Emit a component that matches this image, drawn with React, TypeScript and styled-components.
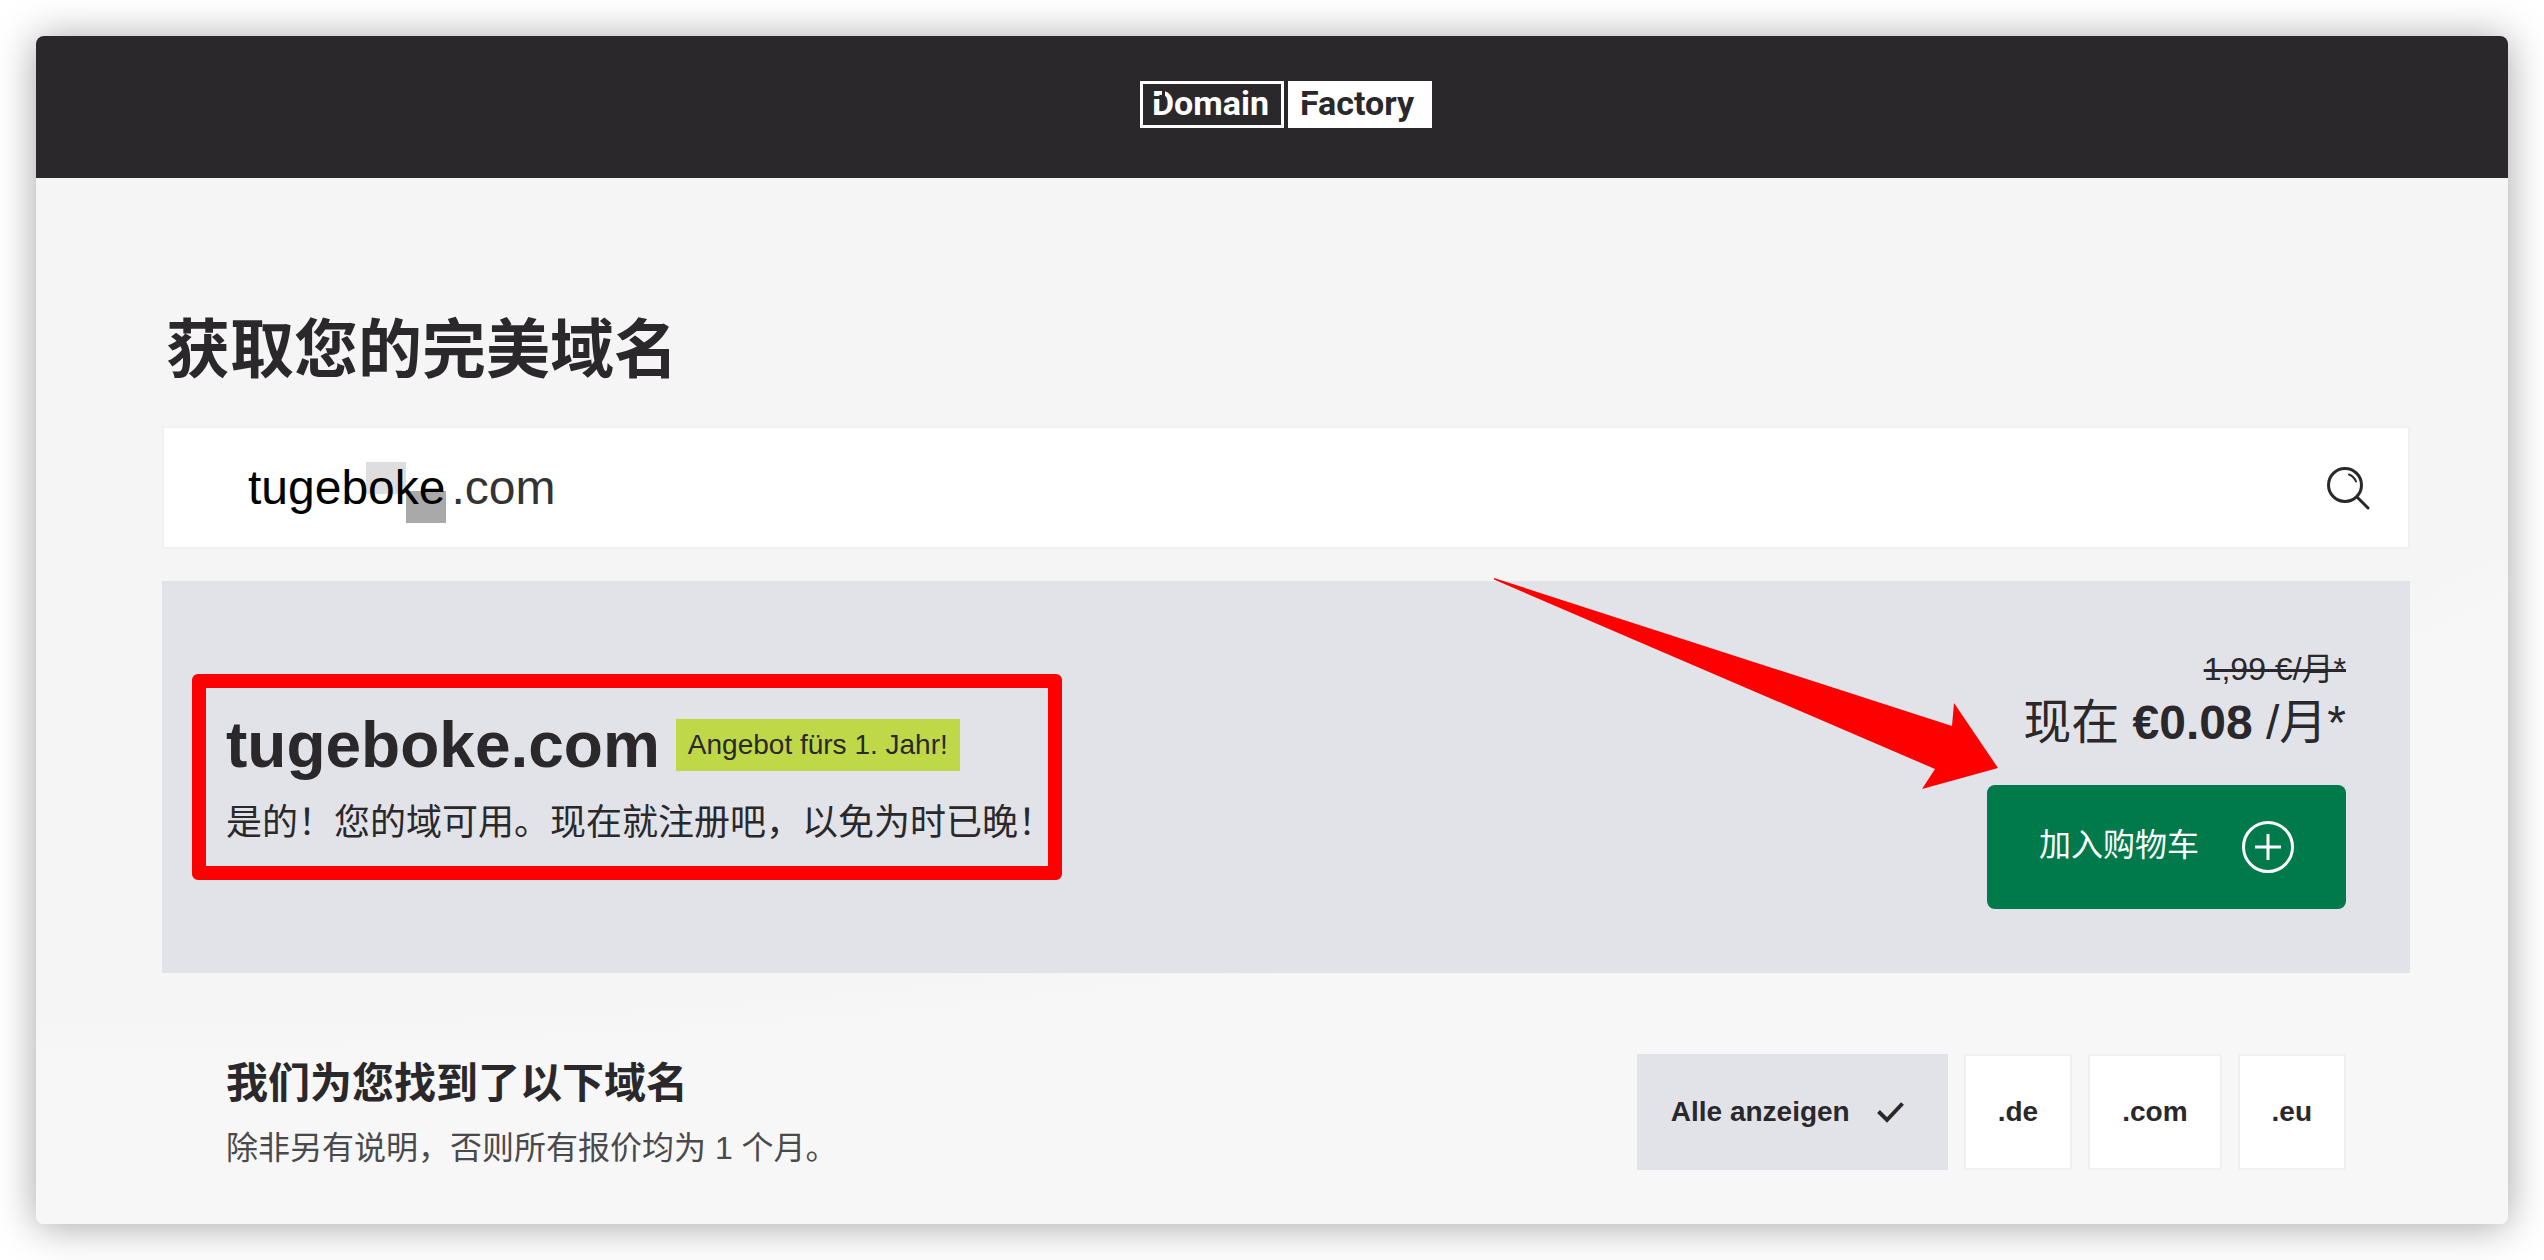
import React, { useState } from "react";
import styled, { createGlobalStyle } from "styled-components";

const ink = "#2a282b";
const panel = "#e2e3e8";
const hairline = "#f0f0f0";
const alertRed = "#ff0000";

const GlobalStyle = createGlobalStyle`
  *, *::before, *::after { box-sizing: border-box; }
  body {
    margin: 0;
    background: #ffffff;
    color: ${ink};
    font-family: "Liberation Sans", "Noto Sans CJK SC", sans-serif;
  }
  h1, h2, h3, p { margin: 0; }
  button, input { font-family: inherit; color: inherit; }
`;

const Stage = styled.div`
  padding: 36px;
`;

const Card = styled.div`
  overflow: hidden;
  border-radius: 8px;
  background: radial-gradient(ellipse 115% 84% at 4% 2%, #f5f5f5 96%, #f7f7f7 100%);
`;

const Shadow = styled.div`
  border-radius: 8px;
  box-shadow: 0 2px 40px rgba(0, 0, 0, 0.36);
`;

const Header = styled.header`
  display: flex;
  align-items: center;
  justify-content: center;
  height: 142px;
  padding: 0 98px 6px 126px;
  background: ${ink};
`;

const LogoLink = styled.a`
  display: block;
  line-height: 0;
`;

const LogoText = styled.text`
  font-family: Roboto, sans-serif;
  font-size: 34px;
  font-weight: 700;
`;

const Main = styled.main`
  padding: 132px 98px 54px 126px;
`;

const PageTitle = styled.h1`
  margin-bottom: 36px;
  padding-left: 4px;
  font-size: 64px;
  line-height: 80px;
  font-weight: 700;
`;

const SearchForm = styled.form`
  display: flex;
  align-items: center;
  height: 123px;
  margin-bottom: 32px;
  padding: 0 38px 0 84px;
  border: 2px solid ${hairline};
  background: #ffffff;
`;

const Masked = styled.span`
  position: relative;
  z-index: 0;
  margin-right: 6px;
  color: #000000;
  font-size: 48px;
  line-height: 60px;
`;

const Tile = styled.span<{ $tone: string; $right: number; $top: number }>`
  position: absolute;
  z-index: -1;
  top: ${(p) => p.$top}px;
  right: ${(p) => p.$right}px;
  width: 40px;
  height: 32px;
  background: ${(p) => p.$tone};
`;

const SearchInput = styled.input`
  flex: 1;
  min-width: 0;
  height: 60px;
  padding: 0;
  border: 0;
  outline: 0;
  background: transparent;
  color: #333333;
  font-size: 48px;
  line-height: 60px;
`;

const IconButton = styled.button`
  display: flex;
  padding: 0;
  border: 0;
  background: transparent;
  cursor: pointer;
`;

const Offer = styled.section`
  position: relative;
  display: flex;
  align-items: center;
  justify-content: space-between;
  padding: 64px;
  background: ${panel};
`;

const OfferInfo = styled.div`
  position: relative;
  display: flex;
  flex-direction: column;
  gap: 12px;
`;

const Marker = styled.div`
  position: absolute;
  inset: -31px -8px -31px -34px;
  border: 14px solid ${alertRed};
  border-radius: 6px;
  pointer-events: none;
`;

const Arrow = styled.svg`
  position: absolute;
  top: -3px;
  right: 412px;
  pointer-events: none;
`;

const DomainLine = styled.div`
  display: flex;
  align-items: center;
  gap: 16px;
`;

const DomainName = styled.h2`
  font-size: 64px;
  line-height: 80px;
  font-weight: 700;
`;

const Badge = styled.span`
  padding: 0 12px;
  background: #bfd847;
  font-size: 28px;
  line-height: 52px;
`;

const OfferText = styled.p`
  font-size: 36px;
  line-height: 52px;
`;

const OfferAction = styled.div`
  display: flex;
  flex-direction: column;
  align-items: flex-end;
`;

const OldPrice = styled.s`
  height: 48px;
  font-size: 32px;
  line-height: 48px;
  text-decoration-thickness: 3px;
`;

const Price = styled.p`
  height: 60px;
  margin-bottom: 32px;
  font-size: 48px;
  line-height: 60px;
`;

const CartButton = styled.button`
  display: flex;
  align-items: center;
  gap: 43px;
  height: 124px;
  padding: 0 52px;
  border: 0;
  border-radius: 8px;
  background: #007a4b;
  color: #ffffff;
  font-size: 32px;
  line-height: 48px;
  cursor: pointer;
`;

const CartLabel = styled.span`
  padding-bottom: 4px;
`;

const Results = styled.section`
  display: flex;
  align-items: flex-start;
  justify-content: space-between;
  padding: 81px 64px 0;
`;

const ResultsIntro = styled.div`
  display: flex;
  flex-direction: column;
  gap: 12px;
`;

const ResultsTitle = styled.h3`
  font-size: 42px;
  line-height: 60px;
  font-weight: 700;
`;

const ResultsNote = styled.p`
  color: #4a4a4c;
  font-size: 32px;
  line-height: 44px;
`;

const Filters = styled.div`
  display: flex;
  gap: 16px;
`;

const FilterButton = styled.button<{ $active: boolean }>`
  display: flex;
  align-items: center;
  gap: 24px;
  height: 116px;
  padding: 0 32px;
  border: 2px solid ${(p) => (p.$active ? panel : hairline)};
  background: ${(p) => (p.$active ? panel : "#ffffff")};
  font-size: 28px;
  line-height: 36px;
  font-weight: 700;
  cursor: pointer;
`;

function Logo() {
  return (
    <svg width="292" height="47" viewBox="0 0 292 47" role="img" aria-label="DomainFactory">
      <rect x="1.5" y="1.5" width="141" height="44" fill="none" stroke="#ffffff" strokeWidth="3" />
      <rect x="148" width="144" height="47" fill="#ffffff" />
      <LogoText x="12" y="34" fill="#ffffff">Domain</LogoText>
      <LogoText x="160" y="34" fill={ink}>Factory</LogoText>
      <path d="M22 8h3v13h-3zM13 15h10v3H13z" fill={ink} />
      <path d="M161 16h7v3h-7z" fill="#ffffff" />
    </svg>
  );
}

function SearchIcon() {
  return (
    <svg width="44" height="44" viewBox="0 0 44 44" fill="none" stroke={ink} strokeLinecap="round" aria-hidden="true">
      <circle cx="19" cy="19" r="16.5" strokeWidth="3" />
      <path d="M31.500 31.500L42 42" strokeWidth="3" />
      <path d="M23 8.500Q28 10.500 30 15.500" strokeWidth="2" />
    </svg>
  );
}

function PlusIcon() {
  return (
    <svg width="52" height="52" viewBox="0 0 52 52" fill="none" stroke="#ffffff" strokeWidth="3" aria-hidden="true">
      <circle cx="26" cy="26" r="24.500" />
      <path d="M26 13v26M13 26h26" />
    </svg>
  );
}

function CheckIcon() {
  return (
    <svg width="40" height="32" viewBox="0 0 40 32" fill="none" stroke={ink} strokeWidth="4" aria-hidden="true">
      <path d="M4.500 15.500L13 24L28.500 7.500" />
    </svg>
  );
}

const filters = ["Alle anzeigen", ".de", ".com", ".eu"];

export default function App() {
  const [query, setQuery] = useState(".com");
  const [active, setActive] = useState(filters[0]);

  return (
    <>
      <GlobalStyle />
      <Stage>
        <Shadow>
          <Card>
            <Header>
              <LogoLink href="#">
                <Logo />
              </LogoLink>
            </Header>
            <Main>
              <PageTitle>获取您的完美域名</PageTitle>
              <SearchForm role="search" onSubmit={(e) => e.preventDefault()}>
                <Masked>
                  <Tile $tone="#dedede" $right={40} $top={4} />
                  <Tile $tone="#a9a9a9" $right={0} $top={33} />
                  tugeboke
                </Masked>
                <SearchInput
                  aria-label="获取您的完美域名"
                  value={query}
                  onChange={(e) => setQuery(e.target.value)}
                />
                <IconButton type="submit" aria-label="Suchen">
                  <SearchIcon />
                </IconButton>
              </SearchForm>
              <Offer>
                <OfferInfo>
                  <DomainLine>
                    <DomainName>tugeboke.com</DomainName>
                    <Badge>Angebot fürs 1. Jahr!</Badge>
                  </DomainLine>
                  <OfferText>是的！您的域可用。现在就注册吧，以免为时已晚！</OfferText>
                  <Marker />
                </OfferInfo>
                <OfferAction>
                  <OldPrice>1,99 €/月*</OldPrice>
                  <Price>
                    现在 <strong>€0.08</strong> /月*
                  </Price>
                  <CartButton type="button">
                    <CartLabel>加入购物车</CartLabel>
                    <PlusIcon />
                  </CartButton>
                </OfferAction>
                <Arrow width="504" height="211" viewBox="0 0 504 211" aria-hidden="true">
                  <path d="M0 0L458 148L460 125L504 190L428 211L441 191L0 1.500Z" fill={alertRed} />
                </Arrow>
              </Offer>
              <Results>
                <ResultsIntro>
                  <ResultsTitle>我们为您找到了以下域名</ResultsTitle>
                  <ResultsNote>除非另有说明，否则所有报价均为 1 个月。</ResultsNote>
                </ResultsIntro>
                <Filters>
                  {filters.map((name) => (
                    <FilterButton
                      key={name}
                      type="button"
                      $active={name === active}
                      aria-pressed={name === active}
                      onClick={() => setActive(name)}
                    >
                      {name}
                      {name === active && <CheckIcon />}
                    </FilterButton>
                  ))}
                </Filters>
              </Results>
            </Main>
          </Card>
        </Shadow>
      </Stage>
    </>
  );
}
